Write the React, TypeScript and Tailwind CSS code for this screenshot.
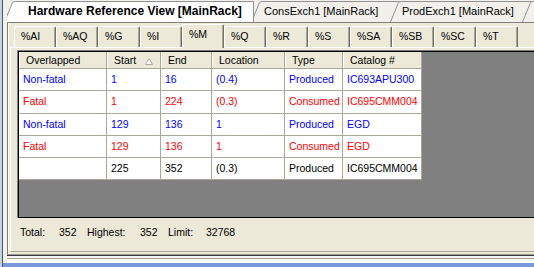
import React from 'react'

type Row = { cls: string; h: number; cells: string[] }

const COLS = [88, 54, 51, 73, 58, 79]
const HEADERS = ['Overlapped', 'Start', 'End', 'Location', 'Type', 'Catalog #']

const ROWS: Row[] = [
  { cls: 'text-[#0000ff]', h: 22, cells: ['Non-fatal', '1', '16', '(0.4)', 'Produced', 'IC693APU300'] },
  { cls: 'text-[#ff0000]', h: 23, cells: ['Fatal', '1', '224', '(0.3)', 'Consumed', 'IC695CMM004'] },
  { cls: 'text-[#0000ff]', h: 22, cells: ['Non-fatal', '129', '136', '1', 'Produced', 'EGD'] },
  { cls: 'text-[#ff0000]', h: 22, cells: ['Fatal', '129', '136', '1', 'Consumed', 'EGD'] },
  { cls: 'text-black', h: 22, cells: ['', '225', '352', '(0.3)', 'Produced', 'IC695CMM004'] },
]

const SEGMENTS = ['%AI', '%AQ', '%G', '%I', '%M', '%Q', '%R', '%S', '%SA', '%SB', '%SC', '%T']

function DocTab({ label, width, active, pad, className }: { label: string; width: number; active?: boolean; pad: number; className?: string }) {
  return (
    <div className={`relative h-[22px] shrink-0 ${active ? 'z-10' : ''} ${className ?? ''}`} style={{ width }}>
      <svg className="absolute inset-0" width={width} height={22}>
        <path
          d={`M0.5 22 L8.5 2.5 Q9.5 1.5 11.5 1.5 L${width - 0.5} 1.5 L${width - 0.5} 22`}
          fill={active ? '#ffffff' : '#f1f0ea'}
          stroke="#919191"
        />
      </svg>
      <span
        className={`relative block pt-[5px] leading-[13px] whitespace-nowrap ${active ? 'text-[12px] font-bold' : 'text-[11px]'}`}
        style={{ paddingLeft: pad }}
      >
        {label}
      </span>
    </div>
  )
}

export default function App() {
  return (
    <div className="flex h-[267px] w-[534px] overflow-hidden bg-[#ece9d8] font-['Liberation_Sans',Arial,sans-serif] text-[10.5px] text-black">
      {/* left gutter */}
      <div className="flex h-full w-[7px] shrink-0">
        <div className="w-[2px] bg-[#c3d1ea]" />
        <div className="w-px bg-[#4d5562]" />
        <div className="flex flex-1 flex-col bg-[#f2f1ea]">
          <div className="flex-1" />
          <div className="h-[4px] bg-[#7a98dc]" />
        </div>
      </div>

      <div className="flex min-w-0 flex-1 flex-col">
        {/* document tabs */}
        <div className="flex h-[22px] shrink-0 overflow-hidden bg-[#f1f0ea]">
          <DocTab label="Hardware Reference View [MainRack]" width={250} pad={24} active className="-ml-[3px]" />
          <DocTab label="ConsExch1 [MainRack]" width={149} pad={13} className="-ml-[3px]" />
          <DocTab label="ProdExch1 [MainRack]" width={142} pad={12} className="-ml-[10px]" />
          <DocTab label="" width={40} pad={12} className="-ml-[10px]" />
        </div>
        <div className="h-px shrink-0 bg-[#808080]" />

        {/* document body */}
        <div className="flex flex-1 flex-col border-l border-[#808080]">
          <div className="flex flex-1 flex-col border-l border-white pl-[1px]">
            {/* segment tabs */}
            <div className="flex h-[24px] shrink-0 items-end pl-[4px]">
              {SEGMENTS.map((s) =>
                s === '%M' ? (
                  <div
                    key={s}
                    className="relative z-10 -mb-px h-[24px] w-[42px] shrink-0 rounded-t-[2px] border-l border-t border-white border-r border-r-[#716f64] bg-[#ece9d8] pl-[6px] pt-[3px] leading-[13px] shadow-[inset_-1px_0_0_#aca899]"
                  >
                    {s}
                  </div>
                ) : (
                  <div
                    key={s}
                    className="h-[21px] w-[42px] shrink-0 rounded-t-[2px] border-l border-t border-white border-r border-r-[#716f64] bg-[#ece9d8] pl-[6px] pt-[3px] leading-[13px] shadow-[inset_-1px_0_0_#aca899]"
                  >
                    {s}
                  </div>
                )
              )}
            </div>

            {/* segment panel */}
            <div className="flex h-[205px] shrink-0 flex-col border-l border-t border-white border-b border-b-[#aca899] pl-[6px] pt-[2px]">
              <div className="h-[168px] border-l border-t border-[#808080]">
                <div className="h-full border-l border-t border-b border-black bg-[#808080]">
                  <div className="w-[403px] bg-white">
                    {/* header */}
                    <div className="flex h-[17px] border-b border-[#aca899] bg-[#ece9d8]">
                      {HEADERS.map((h, i) => (
                        <div
                          key={h}
                          className="relative h-full shrink-0 border-r border-[#aca899] pl-[7px] leading-[17px] shadow-[inset_1px_0_0_#ffffff]"
                          style={{ width: COLS[i] }}
                        >
                          {h}
                          {h === 'Start' && (
                            <svg className="absolute right-[7px] top-[6px]" width="8" height="7" viewBox="0 0 8 7">
                              <path d="M4 0.5 L7.5 6.5 L0.5 6.5 Z" fill="#ffffff" stroke="#aca899" />
                            </svg>
                          )}
                        </div>
                      ))}
                    </div>
                    {/* rows */}
                    {ROWS.map((r, ri) => (
                      <div key={ri} className={`flex border-b border-[#aca899] ${r.cls}`} style={{ height: r.h }}>
                        {r.cells.map((c, i) => (
                          <div
                            key={i}
                            className="flex h-full shrink-0 items-center overflow-hidden border-r border-[#aca899] pl-[4px] whitespace-nowrap"
                            style={{ width: COLS[i] }}
                          >
                            {c}
                          </div>
                        ))}
                      </div>
                    ))}
                  </div>
                </div>
              </div>

              {/* totals */}
              <div className="flex pl-[3px] pt-[8px] leading-[13px]">
                <span className="w-[39px]">Total:</span>
                <span className="w-[28px]">352</span>
                <span className="w-[53px]">Highest:</span>
                <span className="w-[28px]">352</span>
                <span className="w-[38px]">Limit:</span>
                <span>32768</span>
              </div>
            </div>
          </div>
        </div>

        {/* window bottom edge */}
        <div className="h-px shrink-0 bg-[#9d9b8f]" />
        <div className="h-px shrink-0 bg-[#3c3c3c]" />
        <div className="h-[2px] shrink-0 bg-[#f6f5ef]" />
        <div className="h-px shrink-0 bg-[#a5a397]" />
        <div className="h-[4px] shrink-0 bg-white" />
        <div className="h-[4px] shrink-0 bg-[#7a98dc]" />
      </div>
    </div>
  )
}
